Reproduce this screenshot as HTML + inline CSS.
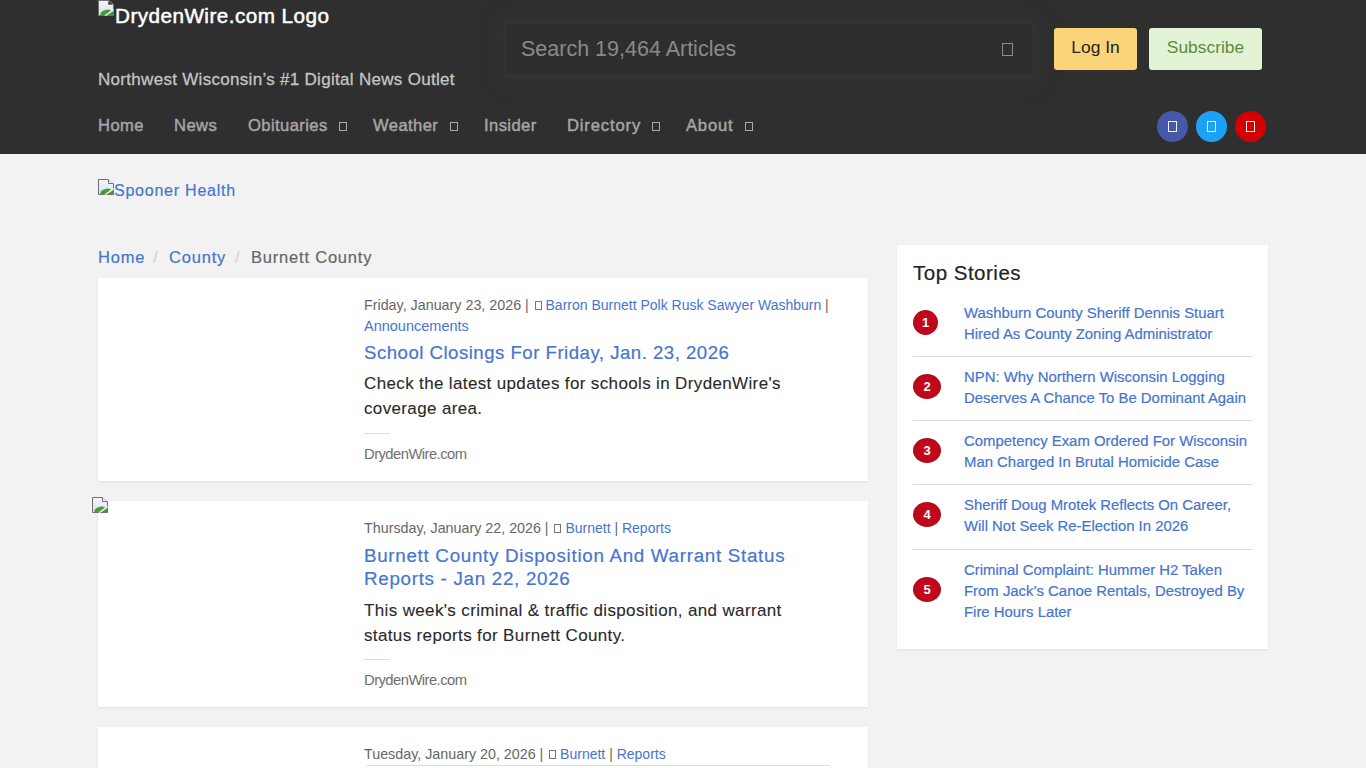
<!DOCTYPE html>
<html><head><meta charset="utf-8">
<style>
*{box-sizing:border-box}
html,body{margin:0;padding:0}
body{width:1366px;height:768px;overflow:hidden;background:#f2f2f2;font-family:"Liberation Sans",sans-serif;position:relative}
.abs{position:absolute;white-space:nowrap}
a{color:#4675d0;text-decoration:none}
#hdr{position:absolute;left:0;top:0;width:1366px;height:154px;background:#2f2f2f}
.bi{position:absolute;width:16px;height:16px;z-index:5}
.logo{left:115px;top:3px;font-size:20.7px;letter-spacing:0.45px;color:#fff;line-height:26px;-webkit-text-stroke:0.5px #fff}
.tag{left:98px;top:69.3px;font-size:17px;letter-spacing:0.3px;color:#c4c4c4;line-height:22px;-webkit-text-stroke:0.3px #c4c4c4}
.search{position:absolute;left:507px;top:24px;width:525px;height:50px;background:#2e2e2e;box-shadow:0 0 0 3px #323232,0 2px 16px 8px #333}
.ph{left:521px;top:37px;font-size:21.5px;color:#8a8a8a;line-height:25px}
.sicon{position:absolute;left:1002px;top:43px;width:11px;height:13px;border:1px solid #8c8c8c}
.btn{position:absolute;top:28px;height:42px;border-radius:3px;font-size:17.4px;line-height:39.5px;text-align:center}
.login{left:1054px;width:83px;background:#fbd47a;color:#2a2218}
.sub{left:1149px;width:113px;background:#e2f3d6;color:#5e8a40}
.nav{top:116.3px;font-size:16.6px;letter-spacing:0.4px;color:#a6a6a6;line-height:20px;-webkit-text-stroke:0.45px #a6a6a6}
.nb{position:absolute;width:8px;height:9px;border:1px solid #a9a9a9;top:122px}
.soc{position:absolute;top:111px;width:31px;height:31px;border-radius:50%}
.soc i{position:absolute;left:11px;top:10px;width:9px;height:11px;border:1.2px solid #f4f4ff}

.ad{left:114px;top:181px;font-size:16px;letter-spacing:0.77px;line-height:20px}
.bc{top:247px;font-size:16.5px;letter-spacing:0.8px;line-height:20px}
.card{position:absolute;left:98px;width:770px;background:#fff;box-shadow:0 1px 2px rgba(0,0,0,0.08)}
.meta{position:absolute;left:266px;width:472px;font-size:14px;line-height:21px;color:#666;white-space:normal}
.meta .q{display:inline-block;width:7px;height:9px;border:1px solid #777;vertical-align:0px;margin:0 4px 0 2px}
.meta .d{font-size:14.3px}
.ttl{position:absolute;left:266px;width:480px;line-height:23px;color:#4675d0}
.exc{position:absolute;left:266px;width:480px;font-size:17px;letter-spacing:0.36px;line-height:25px;color:#2a2a2a}
.dv{position:absolute;left:266px;width:26px;height:1px;background:#ddd}
.src{position:absolute;left:266px;font-size:14.8px;letter-spacing:-0.55px;line-height:18px;color:#6f6f6f}
.side{position:absolute;left:897px;top:245px;width:371px;height:404px;background:#fff;box-shadow:0 1px 2px rgba(0,0,0,0.08)}
.st{position:absolute;left:16px;top:15px;font-size:20.5px;letter-spacing:0.5px;line-height:25px;color:#222;white-space:nowrap}
.it{position:absolute;left:16px;width:340px;border-bottom:1px solid #ddd}
.it .n{position:absolute;left:0;width:28px;height:25px;border-radius:50%;background:radial-gradient(ellipse at center,#c8081d 0%,#c0081b 55%,#920a16 100%);color:#fff;font-size:13px;font-weight:bold;text-align:center;line-height:25px}
.it .l{position:absolute;left:51px;width:289px;font-size:14.9px;line-height:21.2px;color:#4675d0}

.ttl,.it .l,.bc,.ad,.st{-webkit-text-stroke:0.2px currentColor}
.exc{-webkit-text-stroke:0.1px currentColor}
</style></head>
<body>
<div id="hdr"></div>
<svg class="bi" style="left:98px;top:0px" viewBox="0 0 16 16"><defs><linearGradient id="g1" x1="0" y1="0" x2="0" y2="1"><stop offset="0" stop-color="#f6f4ff"/><stop offset="1" stop-color="#d4e2f2"/></linearGradient></defs><path d="M0.5 15.5V0.5H10.5V4.5H15.5V15.5Z" fill="url(#g1)" stroke="#6f6f6f"/><path d="M10.5 0.5L15.5 4.5" stroke="#b8b8c0" stroke-width="0.8"/><path d="M2.5 15V13C4 11 7 9.6 10.5 9.5L13 10.3L8 15Z" fill="#4c9a36"/><path d="M9.5 15L15 11.2V15Z" fill="#4f8a40"/><path d="M7 15.8L15.8 9.6" stroke="#d6f6cc" stroke-width="1.3"/></svg>
<div class="abs logo">DrydenWire.com Logo</div>
<div class="abs tag">Northwest Wisconsin’s #1 Digital News Outlet</div>
<div class="search"></div>
<div class="abs ph">Search 19,464 Articles</div>
<div class="sicon"></div>
<div class="btn login">Log In</div>
<div class="btn sub">Subscribe</div>
<div class="abs nav" style="left:98px">Home</div>
<div class="abs nav" style="left:174px">News</div>
<div class="abs nav" style="left:248px">Obituaries</div><div class="nb" style="left:339px"></div>
<div class="abs nav" style="left:373px">Weather</div><div class="nb" style="left:450px"></div>
<div class="abs nav" style="left:484px">Insider</div>
<div class="abs nav" style="left:567px;letter-spacing:0.85px">Directory</div><div class="nb" style="left:652px"></div>
<div class="abs nav" style="left:686px;letter-spacing:0.8px">About</div><div class="nb" style="left:745px"></div>
<div class="soc" style="left:1157px;background:#4659a8"><i></i></div>
<div class="soc" style="left:1196px;background:#1da1f2"><i></i></div>
<div class="soc" style="left:1235px;background:#d40000"><i></i></div>

<svg class="bi" style="left:98px;top:179px" viewBox="0 0 16 16"><defs><linearGradient id="g2" x1="0" y1="0" x2="0" y2="1"><stop offset="0" stop-color="#f6f4ff"/><stop offset="1" stop-color="#d4e2f2"/></linearGradient></defs><path d="M0.5 15.5V0.5H10.5V4.5H15.5V15.5Z" fill="url(#g2)" stroke="#6f6f6f"/><path d="M10.5 0.5L15.5 4.5" stroke="#b8b8c0" stroke-width="0.8"/><path d="M2.5 15V13C4 11 7 9.6 10.5 9.5L13 10.3L8 15Z" fill="#4c9a36"/><path d="M9.5 15L15 11.2V15Z" fill="#4f8a40"/><path d="M7 15.8L15.8 9.6" stroke="#d6f6cc" stroke-width="1.3"/></svg>
<a class="abs ad">Spooner Health</a>
<a class="abs bc" style="left:98px">Home</a>
<div class="abs bc" style="left:153px;color:#d4d4d4">/</div>
<a class="abs bc" style="left:169px">County</a>
<div class="abs bc" style="left:235px;color:#d4d4d4">/</div>
<div class="abs bc" style="left:251px;color:#666">Burnett County</div>

<div class="card" style="top:278px;height:203px">
 <div class="meta" style="top:17px"><span class="d">Friday, January 23, 2026</span> | <span class="q"></span><a>Barron Burnett Polk Rusk Sawyer Washburn</a> | <a style="font-size:14.5px">Announcements</a></div>
 <div class="ttl" style="top:63px;font-size:18.6px;letter-spacing:0.5px">School Closings For Friday, Jan. 23, 2026</div>
 <div class="exc" style="top:93.4px">Check the latest updates for schools in DrydenWire's<br>coverage area.</div>
 <div class="dv" style="top:155px"></div>
 <div class="src" style="top:167px">DrydenWire.com</div>
</div>
<svg class="bi" style="left:92px;top:497px" viewBox="0 0 16 16"><defs><linearGradient id="g3" x1="0" y1="0" x2="0" y2="1"><stop offset="0" stop-color="#f6f4ff"/><stop offset="1" stop-color="#d4e2f2"/></linearGradient></defs><path d="M0.5 15.5V0.5H10.5V4.5H15.5V15.5Z" fill="url(#g3)" stroke="#6f6f6f"/><path d="M10.5 0.5L15.5 4.5" stroke="#b8b8c0" stroke-width="0.8"/><path d="M2.5 15V13C4 11 7 9.6 10.5 9.5L13 10.3L8 15Z" fill="#4c9a36"/><path d="M9.5 15L15 11.2V15Z" fill="#4f8a40"/><path d="M7 15.8L15.8 9.6" stroke="#d6f6cc" stroke-width="1.3"/></svg>
<div class="card" style="top:501px;height:206px">
 <div class="meta" style="top:17px"><span class="d">Thursday, January 22, 2026</span> | <span class="q"></span><a>Burnett</a> | <a>Reports</a></div>
 <div class="ttl" style="top:43.1px;font-size:18.8px;letter-spacing:0.7px">Burnett County Disposition And Warrant Status<br>Reports - Jan 22, 2026</div>
 <div class="exc" style="top:96.7px">This week's criminal &amp; traffic disposition, and warrant<br>status reports for Burnett County.</div>
 <div class="dv" style="top:158px"></div>
 <div class="src" style="top:170px">DrydenWire.com</div>
</div>
<div class="card" style="top:727px;height:60px">
 <div class="meta" style="top:17px"><span class="d">Tuesday, January 20, 2026</span> | <span class="q"></span><a>Burnett</a> | <a>Reports</a></div>
 <div style="position:absolute;left:267px;top:38px;width:467px;height:10px;border-top:1px solid #dedede;border-radius:4px 4px 0 0"></div>
</div>

<div class="side">
 <div class="st">Top Stories</div>
 <div class="it" style="top:48px;height:64px"><div class="n" style="top:17px;width:25px">1</div><div class="l" style="top:10px">Washburn County Sheriff Dennis Stuart Hired As County Zoning Administrator</div></div>
 <div class="it" style="top:112px;height:64px"><div class="n" style="top:17px">2</div><div class="l" style="top:10px">NPN: Why Northern Wisconsin Logging Deserves A Chance To Be Dominant Again</div></div>
 <div class="it" style="top:176px;height:64px"><div class="n" style="top:17px">3</div><div class="l" style="top:10px">Competency Exam Ordered For Wisconsin Man Charged In Brutal Homicide Case</div></div>
 <div class="it" style="top:240px;height:65px"><div class="n" style="top:17px">4</div><div class="l" style="top:10px">Sheriff Doug Mrotek Reflects On Career, Will Not Seek Re-Election In 2026</div></div>
 <div class="it" style="top:305px;height:85px;border-bottom:none"><div class="n" style="top:27px">5</div><div class="l" style="top:10px">Criminal Complaint: Hummer H2 Taken From Jack’s Canoe Rentals, Destroyed By Fire Hours Later</div></div>
</div>
</body></html>
